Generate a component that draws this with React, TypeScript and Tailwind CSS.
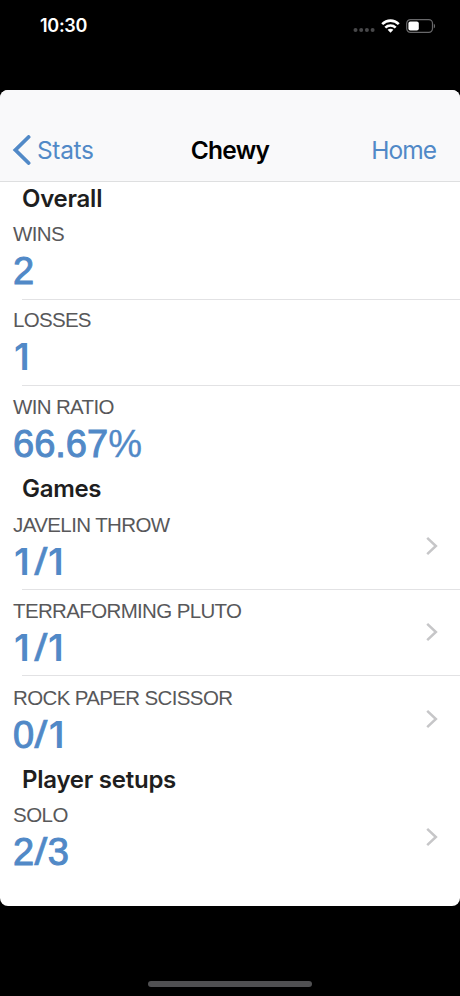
type Stat = { label: string; value: string; labelClass: string };
type Section = { title: string; titleClass: string; linked: boolean; stats: Stat[] };

const sections: Section[] = [
  {
    title: "Overall",
    titleClass: "tracking-[-0.25px]",
    linked: false,
    stats: [
      { label: "WINS", value: "2", labelClass: "tracking-[-0.6px]" },
      { label: "LOSSES", value: "1", labelClass: "tracking-[-0.7px]" },
      { label: "WIN RATIO", value: "66.67%", labelClass: "tracking-[-0.65px]" },
    ],
  },
  {
    title: "Games",
    titleClass: "tracking-[-0.3px]",
    linked: true,
    stats: [
      { label: "JAVELIN THROW", value: "1/1", labelClass: "tracking-[-0.6px]" },
      { label: "TERRAFORMING PLUTO", value: "1/1", labelClass: "tracking-[-0.64px]" },
      { label: "ROCK PAPER SCISSOR", value: "0/1", labelClass: "tracking-[-0.64px]" },
    ],
  },
  {
    title: "Player setups",
    titleClass: "tracking-[-0.25px]",
    linked: true,
    stats: [{ label: "SOLO", value: "2/3", labelClass: "tracking-[-0.5px]" }],
  },
];

function StatusBar() {
  return (
    <div className="flex h-[90px] shrink-0 items-start justify-between pl-[40px] pr-[24px] pt-[16px] text-white">
      <span className="text-[18px] font-semibold leading-5 tracking-[-0.3px]">10:30</span>
      <div className="flex h-5 items-center">
        <svg width="22" height="6" viewBox="0 0 22 6" className="mr-[6px] mt-[8px]" fill="#48484a">
          <circle cx="2.5" cy="3" r="2" />
          <circle cx="8.2" cy="3" r="2" />
          <circle cx="13.9" cy="3" r="2" />
          <circle cx="19.6" cy="3" r="2" />
        </svg>
        <svg width="19" height="14" viewBox="0 0 19 14" className="mb-[1px] mr-[6px]" fill="none" stroke="white" strokeWidth="2.6">
          <path d="M1.2 5.2C6 .4 13 .4 17.8 5.2" />
          <path d="M4.3 8.6C7.2 5.8 11.8 5.8 14.7 8.6" />
          <path d="M9.5 13.8L6.6 10.8C8.2 9.3 10.8 9.3 12.4 10.8Z" fill="white" stroke="none" />
        </svg>
        <svg width="30" height="14" viewBox="0 0 30 14" className="mb-[1px]" fill="none">
          <rect x=".7" y=".7" width="25.8" height="12.6" rx="3.7" stroke="#68686a" strokeWidth="1.2" />
          <rect x="2.4" y="2.4" width="10.4" height="9.2" rx="2" fill="white" />
          <path d="M27.8 4.7C29.5 5.4 29.5 8.6 27.8 9.3Z" fill="#68686a" />
        </svg>
      </div>
    </div>
  );
}

function NavBar() {
  return (
    <header className="grid h-[92px] shrink-0 grid-cols-3 items-end border-b border-[#dedfe0] bg-[#f9f9fa] pb-[15px] pl-[12px] pr-[24px] text-[24.5px] leading-8">
      <a className="flex h-8 items-center text-[#5189c7]">
        <svg width="20" height="30" viewBox="0 0 20 30" className="mr-[5px]" fill="none" stroke="#5189c7" strokeWidth="3.8" strokeLinecap="round" strokeLinejoin="miter">
          <path d="M16.6 2L3.4 15L16.6 28" />
        </svg>
        <span className="tracking-[-0.35px]">Stats</span>
      </a>
      <h1 className="pl-[12px] text-center font-semibold tracking-[-0.7px] text-black">Chewy</h1>
      <a className="text-right tracking-[-0.95px] text-[#5189c7]">Home</a>
    </header>
  );
}

function glyphClass(char: string) {
  if (char === "1") return "inline-block w-[20.5px] pl-[1px] font-['Inter',sans-serif] text-[37px] font-semibold leading-none tracking-normal";
  if (char === "/") return "inline-block w-[13.5px] origin-center scale-x-[1.25] text-center leading-none [-webkit-text-stroke:0.5px_#5189c7]";
  if (char === "%") return "[-webkit-text-stroke:0.3px_#5189c7]";
  return "[-webkit-text-stroke:1px_#5189c7]";
}

function StatRow({ stat, linked, divided }: { stat: Stat; linked: boolean; divided: boolean }) {
  return (
    <li className="flex h-[86.3px] flex-col pl-[13px]">
      <div className="flex flex-1 items-center justify-between pr-[21px]">
        <div className="pt-[3px] font-['Liberation_Sans',Arial,sans-serif]">
          <p className={`whitespace-nowrap text-[20.5px] leading-[24px] text-[#58585a] ${stat.labelClass}`}>{stat.label}</p>
          <p className="mt-[4px] h-[43px] whitespace-nowrap text-[38px] leading-[43px] text-[#5189c7]">
            {stat.value.split("").map((char, i) => (
              <span key={i} className={glyphClass(char)}>{char}</span>
            ))}
          </p>
        </div>
        {linked && (
          <svg width="13" height="20" viewBox="0 0 13 20" className="mb-[1px]" fill="none" stroke="#c6c6c8" strokeWidth="2.5">
            <path d="M1.2 1.8L9.9 10L1.2 18.2" />
          </svg>
        )}
      </div>
      {divided && <div className="ml-[9px] h-px shrink-0 bg-[#e2e2e4]" />}
    </li>
  );
}

export default function App() {
  return (
    <div className="flex h-[996px] w-[460px] flex-col overflow-hidden bg-black font-['Inter',sans-serif]">
      <StatusBar />
      <main className="flex h-[816px] shrink-0 flex-col overflow-hidden rounded-[8px] bg-white">
        <NavBar />
        {sections.map((section) => (
          <section key={section.title}>
            <h2 className={`h-[31.5px] whitespace-nowrap pl-[22px] text-[24px] font-semibold leading-[34px] text-[#1e1e20] ${section.titleClass}`}>
              {section.title}
            </h2>
            <ul>
              {section.stats.map((stat, i) => (
                <StatRow key={stat.label} stat={stat} linked={section.linked} divided={i < section.stats.length - 1} />
              ))}
            </ul>
          </section>
        ))}
      </main>
      <div className="flex flex-1 items-end justify-center pb-[9px]">
        <div className="h-[6px] w-[164px] rounded-full bg-[#505052]" />
      </div>
    </div>
  );
}
